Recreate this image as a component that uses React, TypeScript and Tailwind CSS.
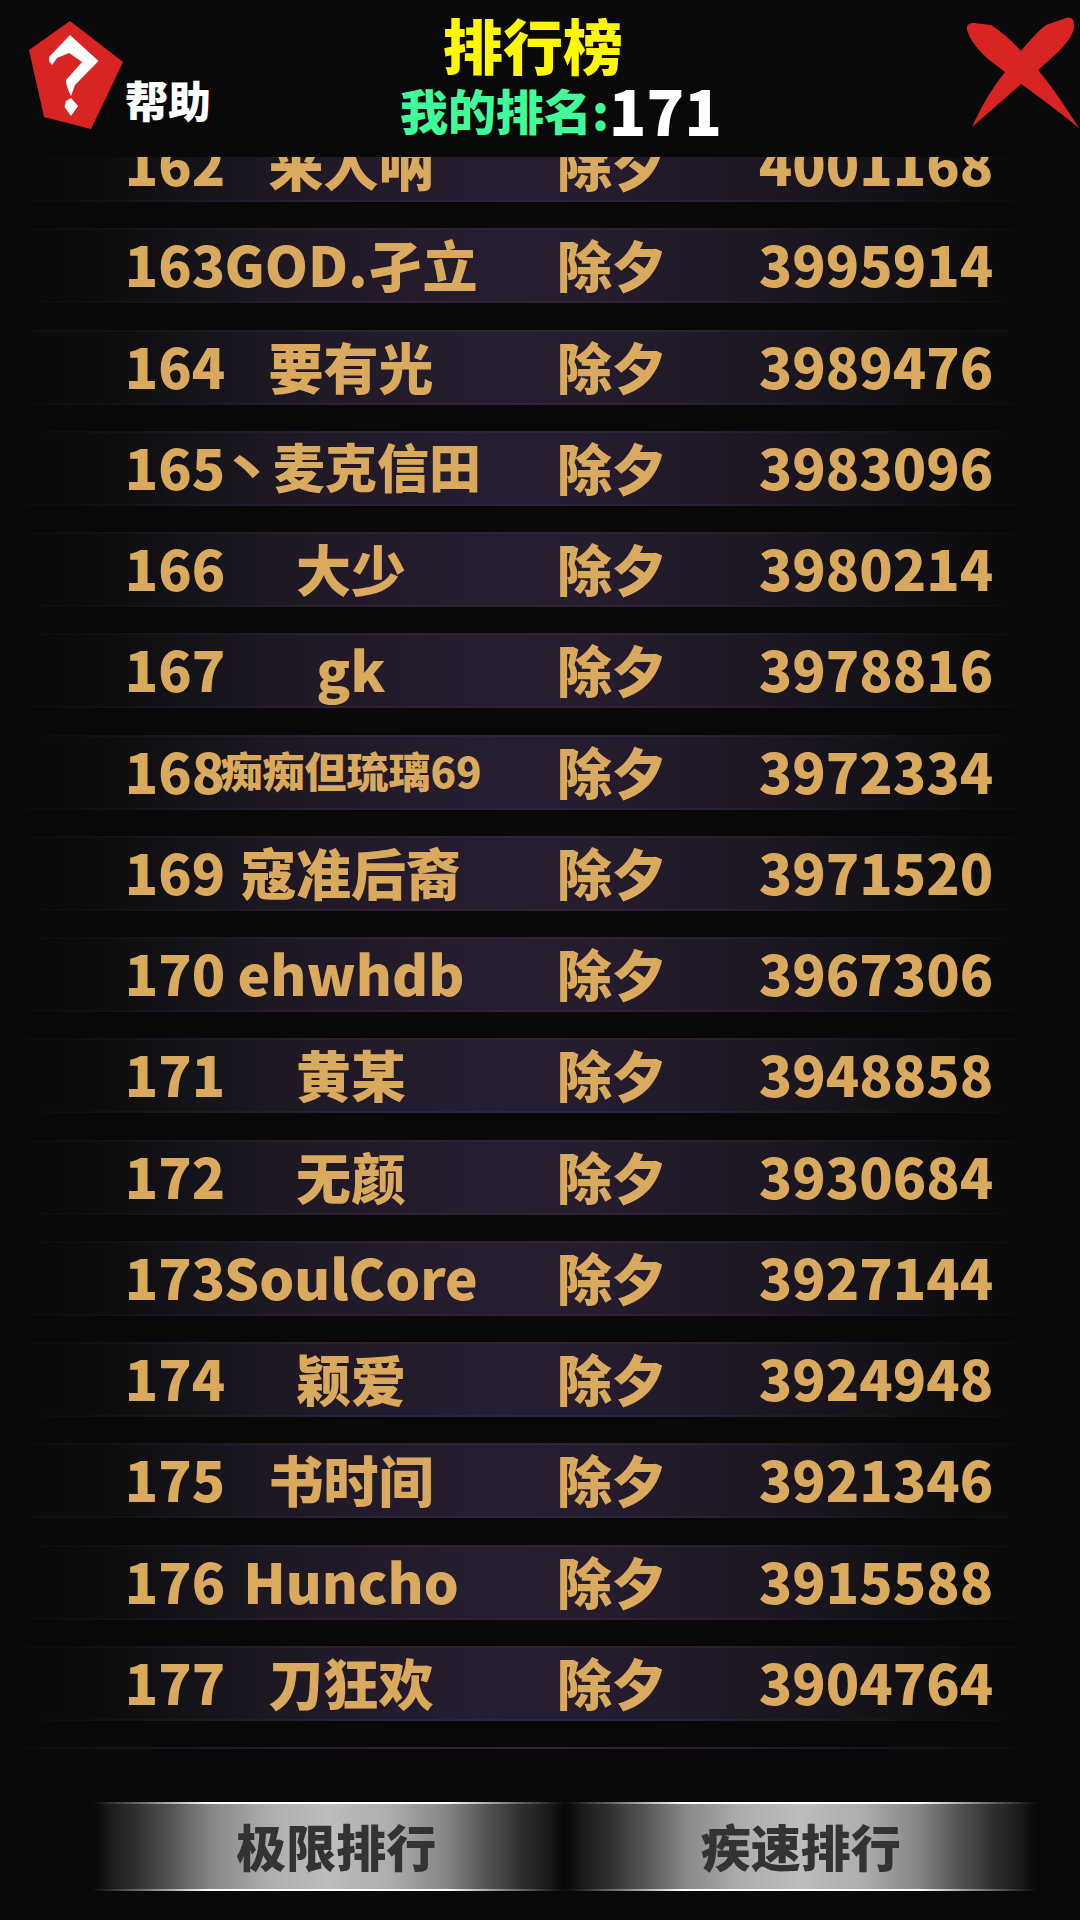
type Entry = {
  rank: number;
  name: string;
  score: number;
  size?: string;
};

const STAGE = "除夕";
const MY_RANK = 171;

const entries: Entry[] = [
  { rank: 162, name: "来人呐", score: 4001168 },
  { rank: 163, name: "GOD.孑立", score: 3995914 },
  { rank: 164, name: "要有光", score: 3989476 },
  { rank: 165, name: "丶麦克信田", score: 3983096, size: "text-[52px]" },
  { rank: 166, name: "大少", score: 3980214 },
  { rank: 167, name: "gk", score: 3978816 },
  { rank: 168, name: "痴痴但琉璃69", score: 3972334, size: "text-[42px]" },
  { rank: 169, name: "寇准后裔", score: 3971520 },
  { rank: 170, name: "ehwhdb", score: 3967306 },
  { rank: 171, name: "黄某", score: 3948858 },
  { rank: 172, name: "无颜", score: 3930684 },
  { rank: 173, name: "SoulCore", score: 3927144 },
  { rank: 174, name: "颖爱", score: 3924948 },
  { rank: 175, name: "书时间", score: 3921346 },
  { rank: 176, name: "Huncho", score: 3915588 },
  { rank: 177, name: "刀狂欢", score: 3904764 },
  { rank: 178, name: "", score: 0 },
];

function HelpIcon() {
  return (
    <svg viewBox="0 0 94 108" className="h-[108px] w-[94px] shrink-0" aria-hidden="true">
      <path d="M41 0 94 41 62 108 15 96 0 29Z" fill="#d92424" />
      <path
        d="M41 14 69.500 40 46 64 42 75C39 69 37 64 37 59L53 41 40 32 28 37 23 44 20 40 20 36Z"
        fill="#fff"
      />
      <path d="M42 77 49 85 42 95 35.500 86 37 80Z" fill="#fff" />
    </svg>
  );
}

function CloseIcon() {
  return (
    <svg viewBox="0 0 114 112" className="h-[112px] w-[114px]" aria-hidden="true">
      <path
        d="M1 13C0 8 3 6 8 6L25 8C36 15 46 24 55 34C63 24 71 15 80 8L100 1C106-1 109 4 108 11C105 25 88 39 72 53C87 71 100 91 113 111C96 97 76 82 55 67L6 110C15 90 26 71 39 55L22 42C12 33 4 23 1 13Z"
        fill="#d92424"
      />
    </svg>
  );
}

function RankRow({ entry }: { entry: Entry }) {
  return (
    <tr className="relative grid h-[75px] shrink-0 grid-cols-[minmax(0,106fr)_minmax(0,246fr)_minmax(0,276fr)_minmax(0,252fr)] items-center bg-[linear-gradient(90deg,#0a0a0a_3%,#0e0e10_11%,#15131a_18%,#1e1823_26%,#231a2b_36%,#261d30_45%,#251c2e_55%,#201927_65%,#1a151f_75%,#121116_83%,#0c0c0d_91%,#090909_96%)] pr-[78px] pb-1 pl-[122px] before:absolute before:inset-x-0 before:top-0 before:h-[2px] before:bg-[linear-gradient(90deg,#0a0a0a_1%,#2b2035_30%,#30243d_50%,#2b2035_65%,#0a0a0a_96%)] after:absolute after:inset-x-0 after:bottom-0 after:h-[2px] after:bg-[linear-gradient(90deg,#0a0a0a_1%,#2b2035_30%,#30243d_50%,#2b2035_65%,#0a0a0a_96%)]">
      <td className="z-10 flex justify-center text-[55px] leading-none">{entry.rank}</td>
      <td className={`z-10 flex justify-center leading-none ${entry.size ?? "text-[55px]"}`}>
        {entry.name}
      </td>
      <td className="z-10 flex justify-center text-[55px] leading-none">{STAGE}</td>
      <td className="z-10 flex justify-center text-[55px] leading-none">{entry.score}</td>
    </tr>
  );
}

function TabButton({ label, className = "" }: { label: string; className?: string }) {
  return (
    <button
      type="button"
      className={`relative h-[89px] bg-[linear-gradient(90deg,#090909_0%,#0b0b0b_1%,#171717_3%,#2e2e2e_9%,#505050_16%,#858585_25%,#adadad_37%,#bdbdbd_50%,#adadad_63%,#858585_75%,#505050_84%,#2e2e2e_91%,#171717_97%,#0b0b0b_99%,#090909_100%)] pb-1 text-[50px] leading-none font-black text-[#333333] before:absolute before:inset-x-0 before:top-0 before:h-[2px] before:bg-[linear-gradient(90deg,#0a0a0a_0%,#ffffff_25%,#ffffff_75%,#0a0a0a_100%)] after:absolute after:inset-x-0 after:bottom-0 after:h-[2px] after:bg-[linear-gradient(90deg,#0a0a0a_0%,#ffffff_25%,#ffffff_75%,#0a0a0a_100%)] ${className}`}
    >
      {label}
    </button>
  );
}

export default function App() {
  return (
    <main
      lang="zh-CN"
      className="flex h-screen flex-col overflow-hidden bg-[#090909] font-['Noto_Sans_CJK_SC',sans-serif] font-black whitespace-nowrap"
    >
      <header className="grid h-[157px] shrink-0 grid-cols-[1fr_auto_1fr] items-start">
        <button type="button" className="flex items-end gap-[2px] pt-[21px] pl-[29px] text-white">
          <HelpIcon />
          <span className="pb-[6px] text-[43px] leading-[48px]">帮助</span>
        </button>
        <div className="flex flex-col items-center">
          <h1 className="pt-3 pr-[14px] text-[60px] leading-[64px] text-[#fff800]">排行榜</h1>
          <p className="flex items-center pl-[42px] leading-[66px]">
            <span className="text-[48px] text-[#40ff98]">我的排名:</span>
            <span className="text-[62px] text-white">{MY_RANK}</span>
          </p>
        </div>
        <button type="button" aria-label="关闭" className="justify-self-end pt-[17px]">
          <CloseIcon />
        </button>
      </header>

      {/* list is scrolled so the first and last rows are cut by the viewport */}
      <section className="min-h-0 flex-1 overflow-hidden">
        <table className="-mt-[30px] flex h-[calc(100%+103px)] flex-col text-[#d9a95d]">
          <tbody className="flex flex-1 flex-col justify-between gap-5">
            {entries.map((entry) => (
              <RankRow key={entry.rank} entry={entry} />
            ))}
          </tbody>
        </table>
      </section>

      <nav className="grid shrink-0 grid-cols-2 pt-[53px] pr-[43px] pb-[29px] pl-[92px]">
        <TabButton label="极限排行" className="pl-4" />
        <TabButton label="疾速排行" />
      </nav>
    </main>
  );
}
